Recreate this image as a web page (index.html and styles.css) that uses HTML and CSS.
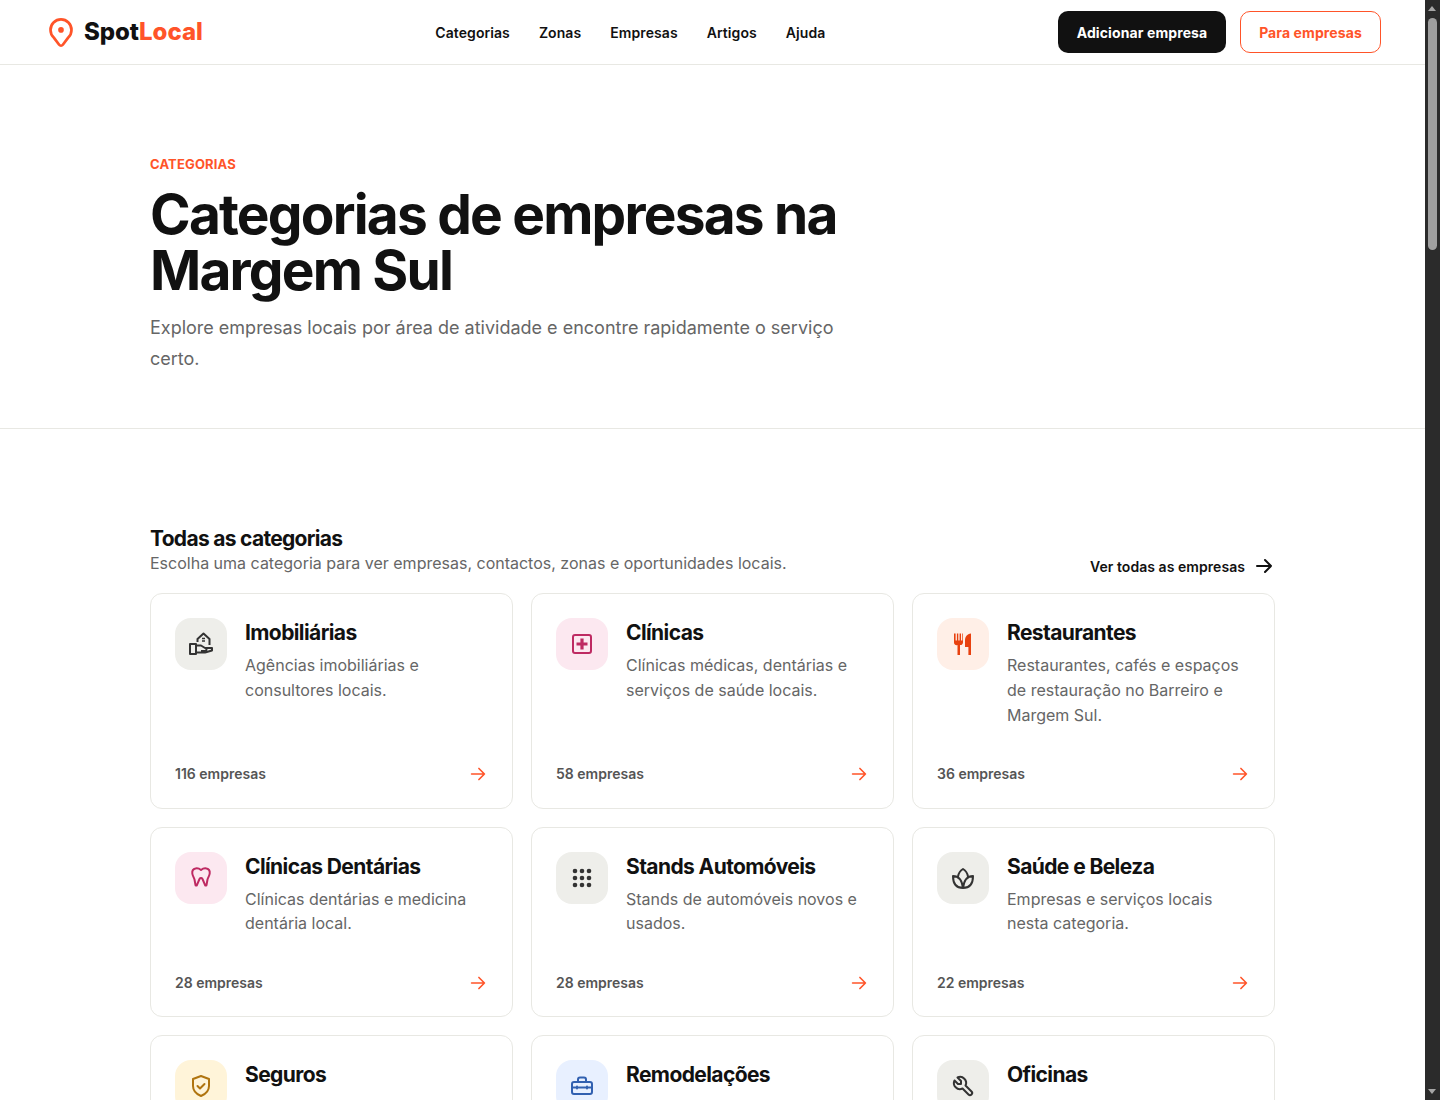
FILE: index.html
```html
<!DOCTYPE html>
<html lang="pt">

<head>
  <meta charset="UTF-8">
  <meta name="viewport" content="width=device-width, initial-scale=1.0">
  <title>Categorias de empresas na Margem Sul - SpotLocal</title>
  <link rel="stylesheet" href="styles.css">
</head>

<body>
  <header class="site-header">
    <a class="logo" href="#">
      <svg class="logo-pin" viewBox="0 0 24 24" fill="none" stroke="currentColor" stroke-width="1.9" stroke-linejoin="round">
        <path d="M17.2 15.8l-3.9 5.2a1.7 1.7 0 0 1-2.6 0l-3.9-5.2a7.4 7.4 0 1 1 10.4 0z" />
        <circle cx="12" cy="10.5" r="2" fill="currentColor" stroke="none" />
      </svg>
      <span>Spot<b>Local</b></span>
    </a>
    <nav class="main-nav">
      <a href="#">Categorias</a>
      <a href="#">Zonas</a>
      <a href="#">Empresas</a>
      <a href="#">Artigos</a>
      <a href="#">Ajuda</a>
    </nav>
    <div class="header-actions">
      <a class="btn btn-dark" href="#">Adicionar empresa</a>
      <a class="btn btn-outline" href="#">Para empresas</a>
    </div>
  </header>

  <section class="hero">
    <div class="container">
      <p class="eyebrow">CATEGORIAS</p>
      <h1>Categorias de empresas na Margem Sul</h1>
      <p class="hero-text">Explore empresas locais por área de atividade e encontre rapidamente o serviço certo.</p>
    </div>
  </section>

  <main class="container listing">
    <div class="listing-head">
      <div>
        <h2>Todas as categorias</h2>
        <p>Escolha uma categoria para ver empresas, contactos, zonas e oportunidades locais.</p>
      </div>
      <a class="see-all" href="#">Ver todas as empresas
        <svg viewBox="0 0 24 24" fill="none" stroke="currentColor" stroke-width="2" stroke-linecap="round" stroke-linejoin="round">
          <path d="M5 12h14M13 18l6-6M13 6l6 6" />
        </svg>
      </a>
    </div>

    <div class="card-grid">
      <a class="card" href="#">
        <div class="card-top">
          <span class="card-icon tone-grey">
            <svg viewBox="0 0 24 24" fill="none" stroke="currentColor" stroke-width="2" stroke-linejoin="round">
              <path d="M8.500 10V7L14.500 1.500 20.500 7v6" />
              <path d="M13 6.500h3M13 9h3" stroke-width="1.500" />
              <path d="M1 12h6v10H1z" />
              <path d="M7 13.500h5l4 2.500a1.500 1.500 0 0 1 0 3h-4" />
              <path d="M7 20.500h9l7-2v-2.500h-7" />
            </svg>
          </span>
          <div>
            <h3>Imobiliárias</h3>
            <p>Agências imobiliárias e consultores locais.</p>
          </div>
        </div>
        <div class="card-foot"><span>116 empresas</span>
          <svg viewBox="0 0 24 24" fill="none" stroke="currentColor" stroke-width="1.800" stroke-linecap="round" stroke-linejoin="round"><path d="M5 12h14M13 18l6-6M13 6l6 6" /></svg>
        </div>
      </a>

      <a class="card" href="#">
        <div class="card-top">
          <span class="card-icon tone-pink">
            <svg viewBox="0 0 24 24" fill="none" stroke="currentColor" stroke-width="2" stroke-linejoin="round">
              <rect x="3" y="3" width="18" height="18" rx="2" />
              <path d="M12 6.500v11M6.500 12h11" stroke-width="3.200" />
            </svg>
          </span>
          <div>
            <h3>Clínicas</h3>
            <p>Clínicas médicas, dentárias e serviços de saúde locais.</p>
          </div>
        </div>
        <div class="card-foot"><span>58 empresas</span>
          <svg viewBox="0 0 24 24" fill="none" stroke="currentColor" stroke-width="1.800" stroke-linecap="round" stroke-linejoin="round"><path d="M5 12h14M13 18l6-6M13 6l6 6" /></svg>
        </div>
      </a>

      <a class="card" href="#">
        <div class="card-top">
          <span class="card-icon tone-orange">
            <svg viewBox="0 0 24 24" fill="currentColor">
              <path d="M3 1.500h1.600v7h1.300v-7h1.400v7h1.300v-7h1.400v7h1.300v-7H12v9a2.500 2.500 0 0 1-3 2.400V23H6.500V12.900A2.500 2.500 0 0 1 3 10.500z" />
              <path d="M20 1.500V23h-2.600v-8H14V8c0-3 2-6 6-6.500z" />
            </svg>
          </span>
          <div>
            <h3>Restaurantes</h3>
            <p>Restaurantes, cafés e espaços de restauração no Barreiro e Margem Sul.</p>
          </div>
        </div>
        <div class="card-foot"><span>36 empresas</span>
          <svg viewBox="0 0 24 24" fill="none" stroke="currentColor" stroke-width="1.800" stroke-linecap="round" stroke-linejoin="round"><path d="M5 12h14M13 18l6-6M13 6l6 6" /></svg>
        </div>
      </a>

      <a class="card" href="#">
        <div class="card-top">
          <span class="card-icon tone-pink">
            <svg viewBox="0 0 24 24" fill="none" stroke="currentColor" stroke-width="2" stroke-linecap="round" stroke-linejoin="round">
              <path d="M12 4C10.500 2.800 8.500 2 6.500 2.500 4 3 3 5 3.300 7.500c.3 2.500 1.700 4 2.200 6l1 5.500c.1.600 1 .900 1.400.2L10.500 13c.7-1.200 2.300-1.200 3 0l2.600 6.200c.4.700 1.300.400 1.400-.2l1-5.500c.5-2 1.900-3.500 2.200-6C21 5 20 3 17.500 2.500 15.500 2 13.500 2.800 12 4z" />
            </svg>
          </span>
          <div>
            <h3>Clínicas Dentárias</h3>
            <p>Clínicas dentárias e medicina dentária local.</p>
          </div>
        </div>
        <div class="card-foot"><span>28 empresas</span>
          <svg viewBox="0 0 24 24" fill="none" stroke="currentColor" stroke-width="1.800" stroke-linecap="round" stroke-linejoin="round"><path d="M5 12h14M13 18l6-6M13 6l6 6" /></svg>
        </div>
      </a>

      <a class="card" href="#">
        <div class="card-top">
          <span class="card-icon tone-grey">
            <svg viewBox="0 0 24 24" fill="currentColor">
              <circle cx="5" cy="5" r="2.300" /><circle cx="12" cy="5" r="2.300" /><circle cx="19" cy="5" r="2.300" />
              <circle cx="5" cy="12" r="2.300" /><circle cx="12" cy="12" r="2.300" /><circle cx="19" cy="12" r="2.300" />
              <circle cx="5" cy="19" r="2.300" /><circle cx="12" cy="19" r="2.300" /><circle cx="19" cy="19" r="2.300" />
            </svg>
          </span>
          <div>
            <h3>Stands Automóveis</h3>
            <p>Stands de automóveis novos e usados.</p>
          </div>
        </div>
        <div class="card-foot"><span>28 empresas</span>
          <svg viewBox="0 0 24 24" fill="none" stroke="currentColor" stroke-width="1.800" stroke-linecap="round" stroke-linejoin="round"><path d="M5 12h14M13 18l6-6M13 6l6 6" /></svg>
        </div>
      </a>

      <a class="card" href="#">
        <div class="card-top">
          <span class="card-icon tone-grey">
            <svg viewBox="0 0 24 24" fill="none" stroke="currentColor" stroke-width="2" stroke-linecap="round" stroke-linejoin="round">
              <path d="M12 22c-5.500 0-10-3-10-12 5 0 9 4 10 12 1-8 5-12 10-12 0 9-4.500 12-10 12z" />
              <path d="M7 10.500C7.500 7.500 9.500 4.500 12 3c2.500 1.500 4.500 4.500 5 7.500" />
            </svg>
          </span>
          <div>
            <h3>Saúde e Beleza</h3>
            <p>Empresas e serviços locais nesta categoria.</p>
          </div>
        </div>
        <div class="card-foot"><span>22 empresas</span>
          <svg viewBox="0 0 24 24" fill="none" stroke="currentColor" stroke-width="1.800" stroke-linecap="round" stroke-linejoin="round"><path d="M5 12h14M13 18l6-6M13 6l6 6" /></svg>
        </div>
      </a>

      <a class="card" href="#">
        <div class="card-top">
          <span class="card-icon tone-yellow">
            <svg viewBox="0 0 24 24" fill="none" stroke="currentColor" stroke-width="2" stroke-linecap="round" stroke-linejoin="round">
              <path d="M12 2l8 3v7c0 4.500-3.200 8-8 10-4.800-2-8-5.500-8-10V5z" />
              <path d="M8.500 12l2.500 2.500 4.500-4.500" />
            </svg>
          </span>
          <div>
            <h3>Seguros</h3>
            <p>Empresas e serviços locais nesta categoria.</p>
          </div>
        </div>
      </a>

      <a class="card" href="#">
        <div class="card-top">
          <span class="card-icon tone-blue">
            <svg viewBox="0 0 24 24" fill="none" stroke="currentColor" stroke-width="2" stroke-linecap="round" stroke-linejoin="round">
              <rect x="2" y="8" width="20" height="12" rx="2" />
              <path d="M8 8V5.500a2 2 0 0 1 2-2h4a2 2 0 0 1 2 2V8" />
              <path d="M2 13.500h20M7 12.500v2M17 12.500v2" />
            </svg>
          </span>
          <div>
            <h3>Remodelações</h3>
            <p>Empresas e serviços locais nesta categoria.</p>
          </div>
        </div>
      </a>

      <a class="card" href="#">
        <div class="card-top">
          <span class="card-icon tone-grey">
            <svg viewBox="0 0 24 24" fill="none" stroke="currentColor" stroke-width="2" stroke-linecap="round" stroke-linejoin="round">
              <path d="M7 10h3V7L6.500 3.500a6 6 0 0 1 8 8l6 6a2 2 0 0 1-3 3l-6-6a6 6 0 0 1-8-8L7 10z" />
            </svg>
          </span>
          <div>
            <h3>Oficinas</h3>
            <p>Empresas e serviços locais nesta categoria.</p>
          </div>
        </div>
      </a>
    </div>
  </main>

  <div class="scrollbar">
    <span class="scroll-up"></span>
    <span class="scroll-thumb"></span>
    <span class="scroll-down"></span>
  </div>
</body>

</html>
```

FILE: styles.css
```css
body {
  margin: 0 15px 0 0;
  background: #fff;
  color: #111;
  font-family: Inter, "Liberation Sans", sans-serif;
}

a {
  color: inherit;
  text-decoration: none;
}

.container {
  width: 1125px;
  margin: 0 auto;
}

.site-header {
  display: flex;
  justify-content: space-between;
  align-items: center;
  height: 64px;
  padding: 0 44px;
  border-bottom: 1px solid #e8e8e3;
}

.logo {
  display: flex;
  align-items: center;
  gap: 6px;
  font-size: 24px;
  font-weight: 800;
  letter-spacing: -0.05px;
}

.logo span {
  margin-bottom: 2px;
}

.logo b {
  color: #ff5429;
  font-weight: 800;
}

.logo-pin {
  width: 34px;
  height: 34px;
  color: #ff5429;
}

.main-nav {
  display: flex;
  gap: 29px;
  font-size: 14px;
  font-weight: 600;
  letter-spacing: 0.08px;
}

.header-actions {
  display: flex;
  gap: 14px;
}

.btn {
  display: flex;
  align-items: center;
  justify-content: center;
  box-sizing: border-box;
  height: 42px;
  border-radius: 10px;
  font-size: 14px;
  font-weight: 700;
  letter-spacing: 0.1px;
}

.btn-dark {
  width: 168px;
  background: #111;
  color: #fff;
}

.btn-outline {
  width: 141px;
  border: 1px solid #ff5429;
  color: #ff5429;
}

.hero {
  height: 364px;
  box-sizing: border-box;
  padding-top: 91px;
  border-bottom: 1px solid #e8e8e3;
}

.eyebrow {
  margin: 0 0 14px;
  color: #ff5429;
  font-size: 13px;
  font-weight: 700;
  line-height: 16px;
  letter-spacing: 0.15px;
}

h1 {
  width: 720px;
  margin: 0 0 14px;
  font-size: 55px;
  font-weight: 700;
  line-height: 56px;
  letter-spacing: -1.8px;
}

.hero-text {
  width: 700px;
  margin: 0;
  color: #666;
  font-size: 18px;
  line-height: 31px;
}

.listing {
  padding-top: 97px;
}

.listing-head {
  display: flex;
  justify-content: space-between;
  align-items: flex-end;
  margin-bottom: 19px;
}

h2 {
  margin: 0;
  font-size: 21px;
  font-weight: 700;
  line-height: 26px;
  letter-spacing: -0.7px;
}

.listing-head p {
  margin: 0;
  color: #666;
  font-size: 16px;
  line-height: 22px;
}

.see-all {
  display: flex;
  align-items: center;
  gap: 7px;
  margin: 0 -1px -4px 0;
  font-size: 14px;
  font-weight: 600;
  letter-spacing: 0.05px;
}

.see-all svg {
  width: 24px;
  height: 24px;
}

.card-grid {
  display: grid;
  grid-template-columns: repeat(3, 1fr);
  gap: 18px;
}

.card {
  display: flex;
  flex-direction: column;
  justify-content: space-between;
  padding: 24px;
  border: 1px solid #e8e8e3;
  border-radius: 12px;
}

.card-top {
  display: flex;
  gap: 18px;
}

.card-icon {
  display: flex;
  flex: none;
  align-items: center;
  justify-content: center;
  width: 52px;
  height: 52px;
  border-radius: 16px;
}

.card-icon svg {
  width: 24px;
  height: 24px;
}

.tone-grey {
  background: #eeeeea;
  color: #333;
}

.tone-pink {
  background: #fce8f0;
  color: #be2a62;
}

.tone-orange {
  background: #ffefe7;
  color: #e8410f;
}

.tone-yellow {
  background: #fff4d9;
  color: #b0740f;
}

.tone-blue {
  background: #e8f0ff;
  color: #3160b0;
}

h3 {
  margin: 0 0 5px;
  font-size: 21px;
  font-weight: 700;
  line-height: 30px;
  letter-spacing: -0.6px;
}

.card-top p {
  margin: 0;
  color: #666;
  font-size: 16px;
  line-height: 24.8px;
}

.card-foot {
  display: flex;
  justify-content: space-between;
  align-items: center;
  height: 19.2px;
  margin-top: 37px;
  color: #555;
  font-size: 14px;
  font-weight: 600;
}

.card-foot svg {
  width: 22px;
  height: 22px;
  margin-right: -1px;
  color: #ff5429;
}

/* the window's own scrollbar, it isn't in the headless picture */
.scrollbar {
  position: fixed;
  top: 0;
  right: 0;
  bottom: 0;
  width: 15px;
  background: #2b2b2b;
}

.scroll-thumb {
  position: absolute;
  top: 18px;
  left: 3px;
  width: 9px;
  height: 232px;
  border-radius: 5px;
  background: #9f9f9f;
}

.scroll-up,
.scroll-down {
  position: absolute;
  left: 3px;
  border-left: 4.5px solid transparent;
  border-right: 4.5px solid transparent;
}

.scroll-up {
  top: 6px;
  border-bottom: 5px solid #a6a6a6;
}

.scroll-down {
  bottom: 6px;
  border-top: 5px solid #a6a6a6;
}
```
